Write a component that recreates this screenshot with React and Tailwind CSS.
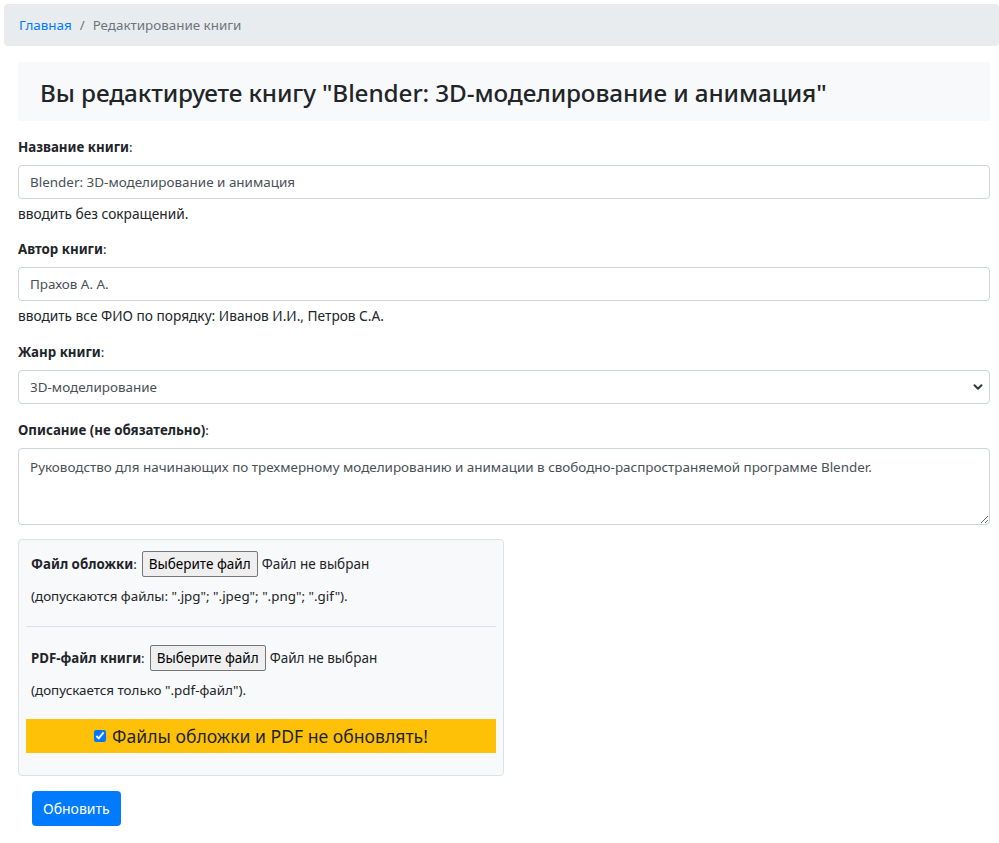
import { ChevronDown } from 'lucide-react';

const FONT = { fontFamily: '"Noto Sans", "Open Sans", Arial, sans-serif' };

function Label({ children }) {
  return (
    <p className="text-[13.3px] text-[#212529] mb-[8px] leading-[20px]">
      <b className="font-bold">{children}</b>:
    </p>
  );
}

function FakeFile({ label }) {
  return (
    <div className="flex items-center text-[13.3px] text-[#212529] leading-[20px]">
      <b className="font-bold">{label}</b>:
      <span className="ml-[5px] h-[26px] px-[6px] flex items-center bg-[#efefef] border border-[#767676] rounded-[2px] text-[13.5px] text-black">
        Выберите файл
      </span>
      <span className="ml-[4px] text-[13.5px]">Файл не выбран</span>
    </div>
  );
}

export default function App() {
  return (
    <div className="min-h-[843px] bg-white text-[#212529] pt-[4px]" style={FONT}>
      {/* breadcrumb */}
      <nav className="ml-[4px] h-[42px] bg-[#e9ecef] rounded-[4px] flex items-center px-[15px] text-[13.4px]">
        <a className="text-[#007bff]">Главная</a>
        <span className="px-[8px] text-[#6c757d]">/</span>
        <span className="text-[#6c757d]">Редактирование книги</span>
      </nav>

      <div className="pl-[18px] pr-[9px]">
        {/* title */}
        <div className="mt-[16px] h-[59px] bg-[#f8f9fa] flex items-center px-[22px] pt-[3px]">
          <h3 className="text-[24.3px] font-medium text-[#212529] tracking-[-0.1px]">
            Вы редактируете книгу "Blender: 3D-моделирование и анимация"
          </h3>
        </div>

        <form className="mt-[16px]">
          <Label>Название книги</Label>
          <input
            defaultValue="Blender: 3D-моделирование и анимация"
            className="w-full h-[34px] border border-[#ced4da] rounded-[4px] px-[11px] text-[13.45px] text-[#495057] outline-none"
          />
          <p className="text-[13.7px] mt-[6px] leading-[18px]">вводить без сокращений.</p>

          <div className="mt-[16px]">
            <Label>Автор книги</Label>
            <input
              defaultValue="Прахов А. А."
              className="w-full h-[34px] border border-[#ced4da] rounded-[4px] px-[11px] text-[13.45px] text-[#495057] outline-none"
            />
            <p className="text-[13.7px] mt-[6px] leading-[18px]">вводить все ФИО по порядку: Иванов И.И., Петров С.А.</p>
          </div>

          <div className="mt-[17px]">
            <Label>Жанр книги</Label>
            <div className="relative">
              <select className="appearance-none w-full h-[34px] border border-[#ced4da] rounded-[4px] px-[11px] text-[13.45px] text-[#495057] bg-white outline-none">
                <option>3D-моделирование</option>
              </select>
              <ChevronDown size={14} strokeWidth={3.5} className="absolute right-[5px] top-[10px] text-[#343a40] pointer-events-none" />
            </div>
          </div>

          <div className="mt-[16px]">
            <Label>Описание (не обязательно)</Label>
            <textarea
              defaultValue="Руководство для начинающих по трехмерному моделированию и анимации в свободно-распространяемой программе Blender."
              className="block w-full h-[77px] border border-[#ced4da] rounded-[4px] px-[11px] py-[8px] text-[13.45px] text-[#495057] outline-none"
            />
          </div>

          {/* files */}
          <div className="mt-[14px] w-[486px] bg-[#f8f9fa] border border-[#dee2e6] rounded-[4px] px-[7px] pt-[11px] pb-[22px]">
            <div className="px-[5px]">
              <FakeFile label="Файл обложки" />
              <p className="text-[13.4px] mt-[10px] leading-[18px]">(допускаются файлы: ".jpg"; ".jpeg"; ".png"; ".gif").</p>
            </div>
            <hr className="mt-[21px] border-[#dee2e6]" />
            <div className="px-[5px] mt-[18px]">
              <FakeFile label="PDF-файл книги" />
              <p className="text-[13.4px] mt-[10px] leading-[18px]">(допускается только ".pdf-файл").</p>
            </div>
            <div className="mt-[20px] h-[34px] bg-[#ffc107] flex items-center justify-center gap-[6px]">
              <input type="checkbox" defaultChecked className="w-[12px] h-[12px]" />
              <span className="text-[17.6px] text-[#212529]">Файлы обложки и PDF не обновлять!</span>
            </div>
          </div>

          <button
            type="button"
            className="mt-[15px] ml-[14px] h-[35px] px-[11px] bg-[#007bff] text-white text-[14px] rounded-[4px]"
          >
            Обновить
          </button>
        </form>
      </div>
    </div>
  );
}
